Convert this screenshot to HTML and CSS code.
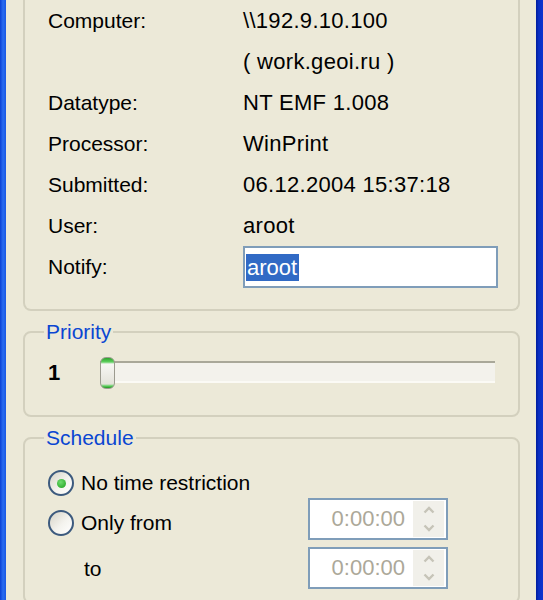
FILE: index.html
```html
<!DOCTYPE html>
<html lang="en">
<head>
    <meta charset="UTF-8">
    <meta name="viewport" content="width=device-width, initial-scale=1.0">
    <title>Document Properties</title>
    <link rel="stylesheet" href="styles.css">
</head>
<body>
    <div class="window">
        <div class="frame-left"></div>

        <div class="client">
            <div class="group group-info">
                <div class="info-grid">
                    <span class="label">Computer:</span><span class="value">\\192.9.10.100</span>
                    <span class="label"></span><span class="value">( work.geoi.ru )</span>
                    <span class="label">Datatype:</span><span class="value">NT EMF 1.008</span>
                    <span class="label">Processor:</span><span class="value">WinPrint</span>
                    <span class="label">Submitted:</span><span class="value">06.12.2004 15:37:18</span>
                    <span class="label">User:</span><span class="value">aroot</span>
                    <span class="label">Notify:</span>
                    <div class="textbox"><span class="selected">aroot</span></div>
                </div>
            </div>

            <fieldset class="group">
                <legend>Priority</legend>
                <div class="priority-row">
                    <span class="priority-value">1</span>
                    <div class="slider">
                        <div class="slider-track"></div>
                        <div class="slider-thumb"></div>
                    </div>
                </div>
            </fieldset>

            <fieldset class="group">
                <legend>Schedule</legend>
                <div class="schedule-grid">
                    <label class="radio radio-first">
                        <span class="radio-box checked"></span>
                        <span>No time restriction</span>
                    </label>
                    <label class="radio radio-second">
                        <span class="radio-box"></span>
                        <span>Only from</span>
                    </label>
                    <div class="spin">
                        <span class="spin-text">0:00:00</span>
                        <span class="spin-buttons">
                            <svg width="12" height="8" viewBox="0 0 12 8"><polyline points="1.5,6.5 6,2 10.5,6.5" fill="none" stroke="#c6c4b8" stroke-width="2.4"/></svg>
                            <svg width="12" height="8" viewBox="0 0 12 8"><polyline points="1.5,1.5 6,6 10.5,1.5" fill="none" stroke="#c6c4b8" stroke-width="2.4"/></svg>
                        </span>
                    </div>
                    <span class="to-label">to</span>
                    <div class="spin">
                        <span class="spin-text">0:00:00</span>
                        <span class="spin-buttons">
                            <svg width="12" height="8" viewBox="0 0 12 8"><polyline points="1.5,6.5 6,2 10.5,6.5" fill="none" stroke="#c6c4b8" stroke-width="2.4"/></svg>
                            <svg width="12" height="8" viewBox="0 0 12 8"><polyline points="1.5,1.5 6,6 10.5,1.5" fill="none" stroke="#c6c4b8" stroke-width="2.4"/></svg>
                        </span>
                    </div>
                </div>
            </fieldset>
        </div>

        <div class="frame-right"></div>
    </div>
</body>
</html>
```

FILE: styles.css
```css
body {
    margin: 0;
    background-color: #ece9d8;
    font-family: "Liberation Sans", Arial, sans-serif;
    color: #000;
}

.window {
    display: flex;
    height: 100vh;
    overflow: hidden;
}

.frame-left {
    width: 6px;
    flex-shrink: 0;
    background: linear-gradient(to right, #0a3fd4, #2a6cf0 50%, #1a58e4);
}

.frame-right {
    width: 7px;
    flex-shrink: 0;
    background: linear-gradient(to right, #001c9c, #0a2fc4 40%, #0b35cf);
}

.client {
    flex: 1;
    display: flex;
    flex-direction: column;
}

.group {
    margin: 9px 16px 0 17px;
    padding: 0;
    border: 2px solid #d3d0be;
    border-radius: 8px;
    min-width: 0;
}

.group legend {
    margin-left: 19px;
    padding: 0 2px;
    font-size: 21px;
    line-height: 24px;
    color: #0a46d2;
}

.group-info {
    margin-top: 0;
    border-top: none;
    border-radius: 0 0 8px 8px;
}

.info-grid {
    display: grid;
    grid-template-columns: 195px 1fr;
    grid-auto-rows: 41px;
    align-items: center;
    padding: 0 20px 22px 23px;
}

.label {
    font-size: 21px;
}

.value {
    font-size: 22px;
    letter-spacing: 0.3px;
}

.textbox {
    height: 38px;
    margin-top: 1px;
    border: 2px solid #7f9db9;
    background-color: #fff;
    display: flex;
    align-items: center;
    padding-left: 1px;
    font-size: 22px;
}

.selected {
    background-color: #316ac5;
    color: #fff;
    padding: 0 2px 0 1px;
    line-height: 27px;
}

.priority-row {
    display: flex;
    align-items: center;
    padding: 13px 21px 26px 23px;
}

.priority-value {
    width: 52px;
    font-size: 22px;
    font-weight: bold;
}

.slider {
    position: relative;
    flex: 1;
    height: 32px;
}

.slider-track {
    position: absolute;
    left: 0;
    right: 2px;
    top: 4px;
    height: 22px;
    box-sizing: border-box;
    border-top: 2px solid #a9a899;
    border-bottom: 2px solid #fbfaf5;
    background-color: #f3f2ec;
}

.slider-thumb {
    position: absolute;
    left: 0;
    top: 0;
    width: 15px;
    height: 32px;
    box-sizing: border-box;
    border: 1px solid #9c9b8f;
    border-radius: 6px;
    background: linear-gradient(to bottom,
        #2ca42c 0, #5fd05f 4px, #f7f7f4 6px, #e4e3da 26px, #5fd05f 28px, #1f951f 100%);
}

.schedule-grid {
    display: grid;
    grid-template-columns: 260px 140px;
    grid-template-rows: 30px 42px 42px;
    row-gap: 0;
    padding: 18px 21px 20px 23px;
    font-size: 21px;
}

.schedule-grid > :nth-child(4),
.schedule-grid > :nth-child(5) {
    margin-top: 7px;
}

.radio {
    display: flex;
    align-items: center;
    gap: 7px;
}

.radio-first {
    grid-column: 1 / 3;
}

.radio-second {
    margin-top: 8px;
}

.radio-box {
    width: 26px;
    height: 26px;
    box-sizing: border-box;
    border-radius: 50%;
    border: 2px solid #3c5a7e;
    background: linear-gradient(135deg, #d6d3c7, #f4f3ee 55%, #ffffff);
    display: flex;
    align-items: center;
    justify-content: center;
}

.radio-box.checked::after {
    content: "";
    width: 9px;
    height: 9px;
    border-radius: 50%;
    background: radial-gradient(circle at 40% 35%, #6fdc6f, #1c9e1c);
}

.to-label {
    padding-left: 36px;
    align-self: center;
    padding-top: 8px;
}

.spin {
    display: flex;
    align-items: stretch;
    border: 2px solid #7f9db9;
    background-color: #fff;
    box-sizing: border-box;
    height: 42px;
}

.spin-text {
    flex: 1;
    display: flex;
    align-items: center;
    justify-content: flex-end;
    padding-right: 8px;
    font-size: 22px;
    color: #aca899;
}

.spin-buttons {
    width: 31px;
    margin: 1px 2px 1px 0;
    display: flex;
    flex-direction: column;
    align-items: center;
    justify-content: space-around;
    background-color: #f1f0ea;
}
```
